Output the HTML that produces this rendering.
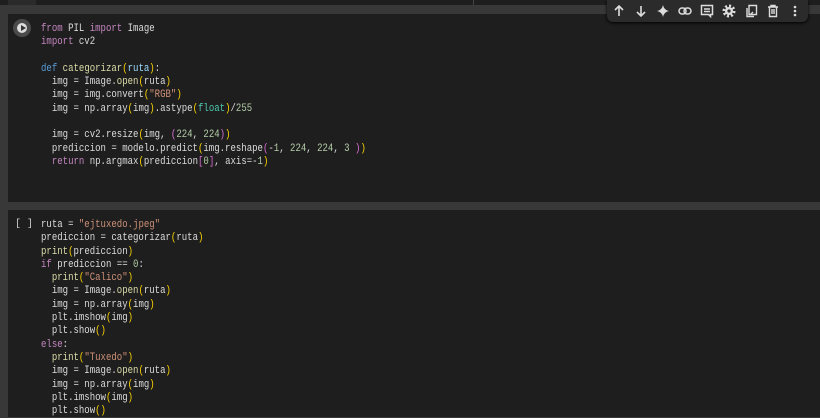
<!DOCTYPE html>
<html><head><style>
body{margin:0;width:820px;height:417px;background:#383838;overflow:hidden;position:relative;font-family:"Liberation Mono",monospace}
.top{position:absolute;left:0;top:0;width:820px;height:5px;background:#1e1e1e}
.cell{position:absolute;left:8px;right:0;background:#1e1e1e}
pre{position:absolute;margin:0;left:41px;font-family:"Liberation Mono",monospace;font-size:11px;line-height:13.3px;color:#dcdcdc;transform:scaleX(0.82);transform-origin:0 0}
.k{color:#c586c0}.d{color:#569cd6}.f{color:#dcdcaa}.p{color:#9cdcfe}.s{color:#ce9178}.n{color:#b5cea8}.y{color:#ffd700}.m{color:#da70d6}.b{color:#179fff}.t{color:#4ec9b0}
.run{position:absolute;left:13px;top:19px;width:18px;height:18px;border-radius:50%;background:#4a4a4a}
.run:after{content:"";position:absolute;left:4px;top:4px;width:10px;height:10px;border-radius:50%;background:#ddd}
.run i{position:absolute;left:8px;top:6px;border-left:5px solid #333;border-top:3px solid transparent;border-bottom:3px solid transparent;z-index:2}
.bk{position:absolute;left:15px;top:219px;color:#ccc;font-size:10px}
.tb{position:absolute;left:607px;top:0;width:201px;height:22px;background:#2b2b2b;border-radius:0 0 6px 6px;box-shadow:0 1px 3px #000}
.tb svg{position:absolute;top:4px}
</style></head><body>
<div class="top"></div>
<div style="position:absolute;left:8px;top:0;width:28px;height:5px;background:#2a2a2a"></div>
<div style="position:absolute;left:473px;top:0;width:1px;height:5px;background:#444"></div>
<div class="cell" style="top:14px;height:188px"></div>
<div class="cell" style="top:210px;height:207px"></div>
<div class="run"><i></i></div>
<pre style="top:23px"><span class="k">from</span> PIL <span class="k">import</span> Image
<span class="k">import</span> cv2

<span class="d">def</span> <span class="f">categorizar</span><span class="y">(</span><span class="p">ruta</span><span class="y">)</span>:
  img = Image.<span class="f">open</span><span class="y">(</span>ruta<span class="y">)</span>
  img = img.convert<span class="y">(</span><span class="s">"RGB"</span><span class="y">)</span>
  img = np.array<span class="y">(</span>img<span class="y">)</span>.astype<span class="y">(</span><span class="t">float</span><span class="y">)</span>/<span class="n">255</span>

  img = cv2.resize<span class="y">(</span>img, <span class="m">(</span><span class="n">224</span>, <span class="n">224</span><span class="m">)</span><span class="y">)</span>
  prediccion = modelo.predict<span class="y">(</span>img.reshape<span class="m">(</span>-<span class="n">1</span>, <span class="n">224</span>, <span class="n">224</span>, <span class="n">3</span> <span class="m">)</span><span class="y">)</span>
  <span class="k">return</span> np.argmax<span class="y">(</span>prediccion<span class="m">[</span><span class="n">0</span><span class="m">]</span>, axis=-<span class="n">1</span><span class="y">)</span></pre>
<div class="bk">[ ]</div>
<pre style="top:219px">ruta = <span class="s">"ejtuxedo.jpeg"</span>
prediccion = categorizar<span class="y">(</span>ruta<span class="y">)</span>
<span class="f">print</span><span class="y">(</span>prediccion<span class="y">)</span>
<span class="k">if</span> prediccion == <span class="n">0</span>:
  <span class="f">print</span><span class="y">(</span><span class="s">"Calico"</span><span class="y">)</span>
  img = Image.<span class="f">open</span><span class="y">(</span>ruta<span class="y">)</span>
  img = np.array<span class="y">(</span>img<span class="y">)</span>
  plt.imshow<span class="y">(</span>img<span class="y">)</span>
  plt.show<span class="y">()</span>
<span class="k">else</span>:
  <span class="f">print</span><span class="y">(</span><span class="s">"Tuxedo"</span><span class="y">)</span>
  img = Image.<span class="f">open</span><span class="y">(</span>ruta<span class="y">)</span>
  img = np.array<span class="y">(</span>img<span class="y">)</span>
  plt.imshow<span class="y">(</span>img<span class="y">)</span>
  plt.show<span class="y">()</span></pre>
<div class="tb">
<svg style="left:5px" width="14" height="14" viewBox="0 0 14 14" fill="none" stroke="#ddd" stroke-width="1.6"><path d="M7 12V2M3 6l4-4 4 4"/></svg>
<svg style="left:27px" width="14" height="14" viewBox="0 0 14 14" fill="none" stroke="#ddd" stroke-width="1.6"><path d="M7 2v10M3 8l4 4 4-4"/></svg>
<svg style="left:49px" width="14" height="14" viewBox="0 0 14 14"><path d="M7 1Q8 6 13 7Q8 8 7 13Q6 8 1 7Q6 6 7 1Z" fill="#ddd"/></svg>
<svg style="left:71px" width="14" height="14" viewBox="0 0 14 14" fill="none" stroke="#ddd" stroke-width="1.5"><rect x="1" y="4" width="7" height="6" rx="3"/><rect x="6" y="4" width="7" height="6" rx="3"/></svg>
<svg style="left:93px" width="14" height="14" viewBox="0 0 14 14" fill="none" stroke="#ddd" stroke-width="1.5"><path d="M1.5 1.5h11v9h-2v2l-2-2h-7z"/><path d="M4 5h6M4 7.5h6"/></svg>
<svg style="left:115px" width="14" height="14" viewBox="0 0 14 14"><circle cx="7" cy="7" r="5" fill="none" stroke="#ddd" stroke-width="3" stroke-dasharray="2 1.9"/><circle cx="7" cy="7" r="4" fill="#ddd"/><circle cx="7" cy="7" r="1.6" fill="#2b2b2b"/></svg>
<svg style="left:137px" width="14" height="14" viewBox="0 0 14 14" fill="none" stroke="#ddd" stroke-width="1.4"><path d="M5 1.5h7.5v9H5zM3 4v8.5h7M6 11l3-3"/></svg>
<svg style="left:159px" width="14" height="14" viewBox="0 0 14 14" fill="none" stroke="#ddd" stroke-width="1.4"><path d="M2 3h10M5 3V1.5h4V3M3.5 3v9.5h7V3M6 5v5M8 5v5"/></svg>
<svg style="left:181px" width="14" height="14" viewBox="0 0 14 14" fill="#ddd"><circle cx="7" cy="3" r="1.3"/><circle cx="7" cy="7" r="1.3"/><circle cx="7" cy="11" r="1.3"/></svg>
</div>
</body></html>
